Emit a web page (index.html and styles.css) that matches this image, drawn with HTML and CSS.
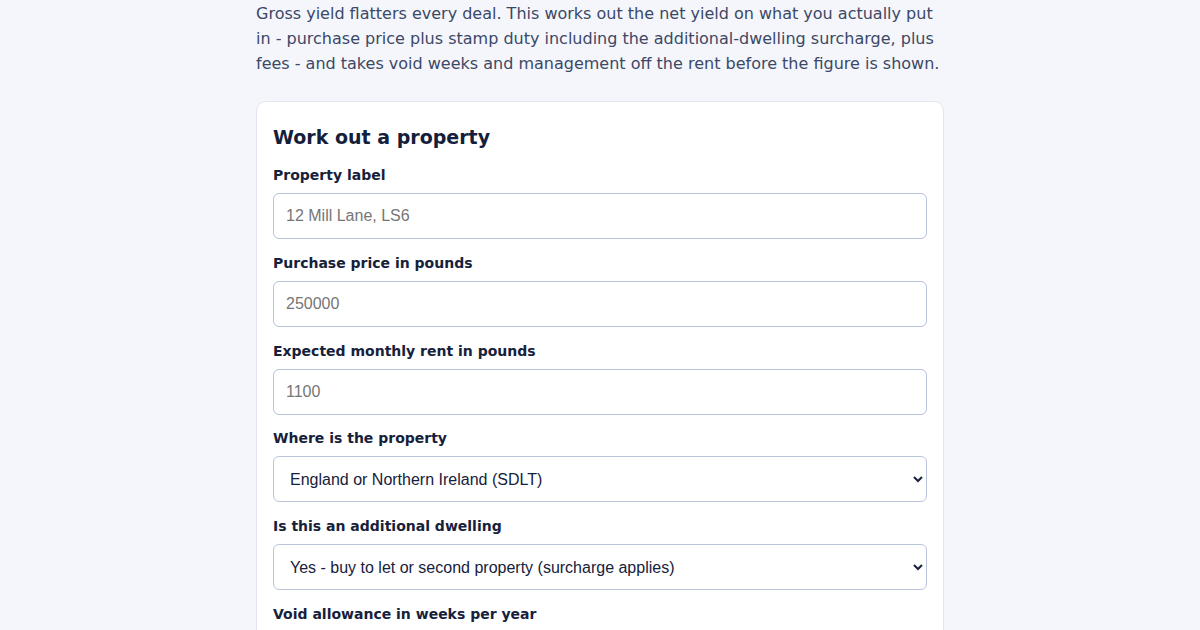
FILE: index.html
```html
<!DOCTYPE html>
<html lang="en">
<head>
<meta charset="utf-8">
<title>Net yield calculator</title>
<link rel="stylesheet" href="styles.css">
</head>
<body>
<main class="page">
  <p class="intro">Gross yield flatters every deal. This works out the net yield on what you actually put in - purchase price plus stamp duty including the additional-dwelling surcharge, plus fees - and takes void weeks and management off the rent before the figure is shown.</p>
  <section class="card">
    <h2 class="card-title">Work out a property</h2>
    <label class="field-label" for="label">Property label</label>
    <input class="field" id="label" type="text" placeholder="12 Mill Lane, LS6">
    <label class="field-label" for="price">Purchase price in pounds</label>
    <input class="field" id="price" type="text" placeholder="250000">
    <label class="field-label" for="rent">Expected monthly rent in pounds</label>
    <input class="field" id="rent" type="text" placeholder="1100">
    <label class="field-label" for="where">Where is the property</label>
    <select class="field select" id="where">
      <option>England or Northern Ireland (SDLT)</option>
      <option>Scotland (LBTT)</option>
      <option>Wales (LTT)</option>
    </select>
    <label class="field-label" for="additional">Is this an additional dwelling</label>
    <select class="field select" id="additional">
      <option>Yes - buy to let or second property (surcharge applies)</option>
      <option>No</option>
    </select>
    <label class="field-label" for="void">Void allowance in weeks per year</label>
    <input class="field" id="void" type="text" placeholder="2">
  </section>
</main>
</body>
</html>
```
FILE: styles.css
```css
html, body {
  margin: 0;
  padding: 0;
  background: #f4f6fb;
}
body {
  font-family: "DejaVu Sans", sans-serif;
  color: #16213b;
}
.page {
  width: 688px;
  margin: 0 auto;
  padding: 1px 0 40px;
}
.intro {
  margin: 0 0 25px;
  font-size: 16px;
  line-height: 25px;
  color: #3b4866;
}
.card {
  background: #ffffff;
  border: 1px solid #e1e6ef;
  border-radius: 10px;
  padding: 16px;
  display: flex;
  flex-direction: column;
}
.card-title {
  margin: 5px 0 0;
  font-size: 19px;
  line-height: 28px;
  font-weight: bold;
  color: #14203b;
}
.field-label {
  display: block;
  margin: 13.75px 0 8px;
  font-size: 14px;
  line-height: 20px;
  font-weight: bold;
  color: #16213b;
}
.card-title + .field-label {
  margin-top: 14px;
}
.field {
  box-sizing: border-box;
  width: 100%;
  height: 46px;
  margin: 0;
  padding: 0 12px;
  border: 1px solid #b9c4db;
  border-radius: 6px;
  background: #ffffff;
  font-family: "Liberation Sans", Arial, sans-serif;
  font-size: 16px;
  color: #16213b;
}
.field::placeholder {
  color: #767676;
}
.select {
  color: #16213b;
}
```
